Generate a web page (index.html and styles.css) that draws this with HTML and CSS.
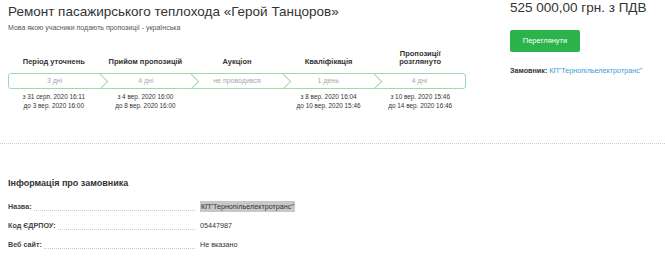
FILE: index.html
```html
<!DOCTYPE html>
<html>
<head>
	<meta charset="utf-8">
	<title>Ремонт пасажирського теплохода</title>
	<link rel="stylesheet" href="styles.css">
</head>
<body>
	<div class="top">
		<div class="tender">
			<h1 class="title">Ремонт пасажирського теплохода «Герой Танцоров»</h1>
			<div class="lang">Мова якою учасники подають пропозиції - українська</div>

			<div class="stages">
				<div class="stage-heads">
					<div>Період уточнень</div>
					<div>Прийом пропозицій</div>
					<div>Аукціон</div>
					<div>Кваліфікація</div>
					<div>Пропозиції<br>розглянуто</div>
				</div>
				<div class="stage-bar">
					<div class="seg">3 дні</div>
					<div class="seg">4 дні</div>
					<div class="seg">не проводився</div>
					<div class="seg">1 день</div>
					<div class="seg">4 дні</div>
				</div>
				<div class="stage-dates">
					<div>з 31 серп. 2020 16:11<br>до 3 вер. 2020 16:00</div>
					<div>з 4 вер. 2020 16:00<br>до 8 вер. 2020 16:00</div>
					<div></div>
					<div>з 8 вер. 2020 16:04<br>до 10 вер. 2020 15:46</div>
					<div>з 10 вер. 2020 15:46<br>до 14 вер. 2020 16:46</div>
				</div>
			</div>
		</div>

		<div class="side">
			<div class="price">525 000,00 грн. з ПДВ</div>
			<a class="btn" href="#">Переглянути</a>
			<div class="buyer"><b>Замовник:</b> <a href="#">КП"Тернопільелектротранс"</a></div>
		</div>
	</div>

	<div class="divider"></div>

	<div class="info">
		<h2 class="info-title">Інформація про замовника</h2>
		<div class="row">
			<span class="label">Назва:</span>
			<span class="value"><span class="hl">КП"Тернопільелектротранс"</span></span>
		</div>
		<div class="row">
			<span class="label">Код ЄДРПОУ:</span>
			<span class="value">05447987</span>
		</div>
		<div class="row">
			<span class="label">Веб сайт:</span>
			<span class="value">Не вказано</span>
		</div>
	</div>
</body>
</html>
```

FILE: styles.css
```css
* {
	font-family: "Liberation Sans", Arial, sans-serif;
	box-sizing: border-box;
}

body {
	margin: 0;
	background: #fff;
	color: #333;
}

.top {
	display: flex;
	padding: 0 8px;
}

.tender {
	width: 460px;
}

.title {
	margin: 4px 0 0;
	font-size: 13.5px;
	line-height: 15px;
	font-weight: 400;
	color: #333;
}

.lang {
	margin-top: 4px;
	font-size: 7px;
	line-height: 10px;
	color: #555;
}

.stages {
	width: 458px;
	margin-top: 17px;
}

.stage-heads, .stage-bar, .stage-dates {
	display: flex;
}

.stage-heads > div, .stage-bar > .seg, .stage-dates > div {
	flex: 1;
	text-align: center;
}

.stage-heads {
	align-items: flex-end;
	height: 16px;
}

.stage-heads > div {
	font-size: 7.5px;
	line-height: 8px;
	font-weight: 700;
	color: #333;
}

.stage-bar {
	margin-top: 7px;
	height: 16px;
	border: 1px solid #9edbab;
	border-radius: 3px;
}

.seg {
	position: relative;
	font-size: 7px;
	line-height: 14px;
	color: #aaa;
}

.seg + .seg::before {
	content: '';
	position: absolute;
	left: -5px;
	top: 2px;
	width: 10px;
	height: 10px;
	border-top: 1px solid #9edbab;
	border-right: 1px solid #9edbab;
	transform: rotate(45deg);
}

.stage-dates {
	margin-top: 4px;
}

.stage-dates > div {
	font-size: 6.4px;
	line-height: 8.5px;
	color: #333;
}

.side {
	margin-left: 42px;
}

.price {
	font-size: 13.5px;
	line-height: 15px;
	color: #333;
}

.btn {
	display: block;
	margin-top: 15px;
	width: 70px;
	height: 22px;
	line-height: 22px;
	text-align: center;
	background-color: #2db34b;
	border-radius: 2px;
	color: #fff;
	font-size: 7.5px;
	text-decoration: none;
}

.buyer {
	margin-top: 14px;
	font-size: 7.2px;
	line-height: 10px;
}

.buyer b {
	font-weight: 700;
	color: #333;
}

.buyer a {
	color: #3d9ad6;
	text-decoration: none;
}

.divider {
	margin-top: 33px;
	border-top: 1px dotted #c3cfda;
}

.info {
	padding: 0 8px;
}

.info-title {
	margin: 33px 0 0;
	font-size: 9px;
	line-height: 12px;
	font-weight: 700;
	color: #333;
}

.info-title + .row {
	margin-top: 8px;
}

.row {
	display: flex;
	font-size: 7.2px;
	line-height: 19px;
}

.label {
	display: flex;
	width: 187px;
	flex-shrink: 0;
	font-weight: 700;
	color: #444;
}

.label::after {
	content: '';
	flex: 1;
	height: 13px;
	margin-left: 2px;
	border-bottom: 1px dotted #c8c8c8;
}

.value {
	margin-left: 5px;
	color: #333;
}

.hl {
	background: #c8c8c8;
	padding: 1px 1px;
}
```
